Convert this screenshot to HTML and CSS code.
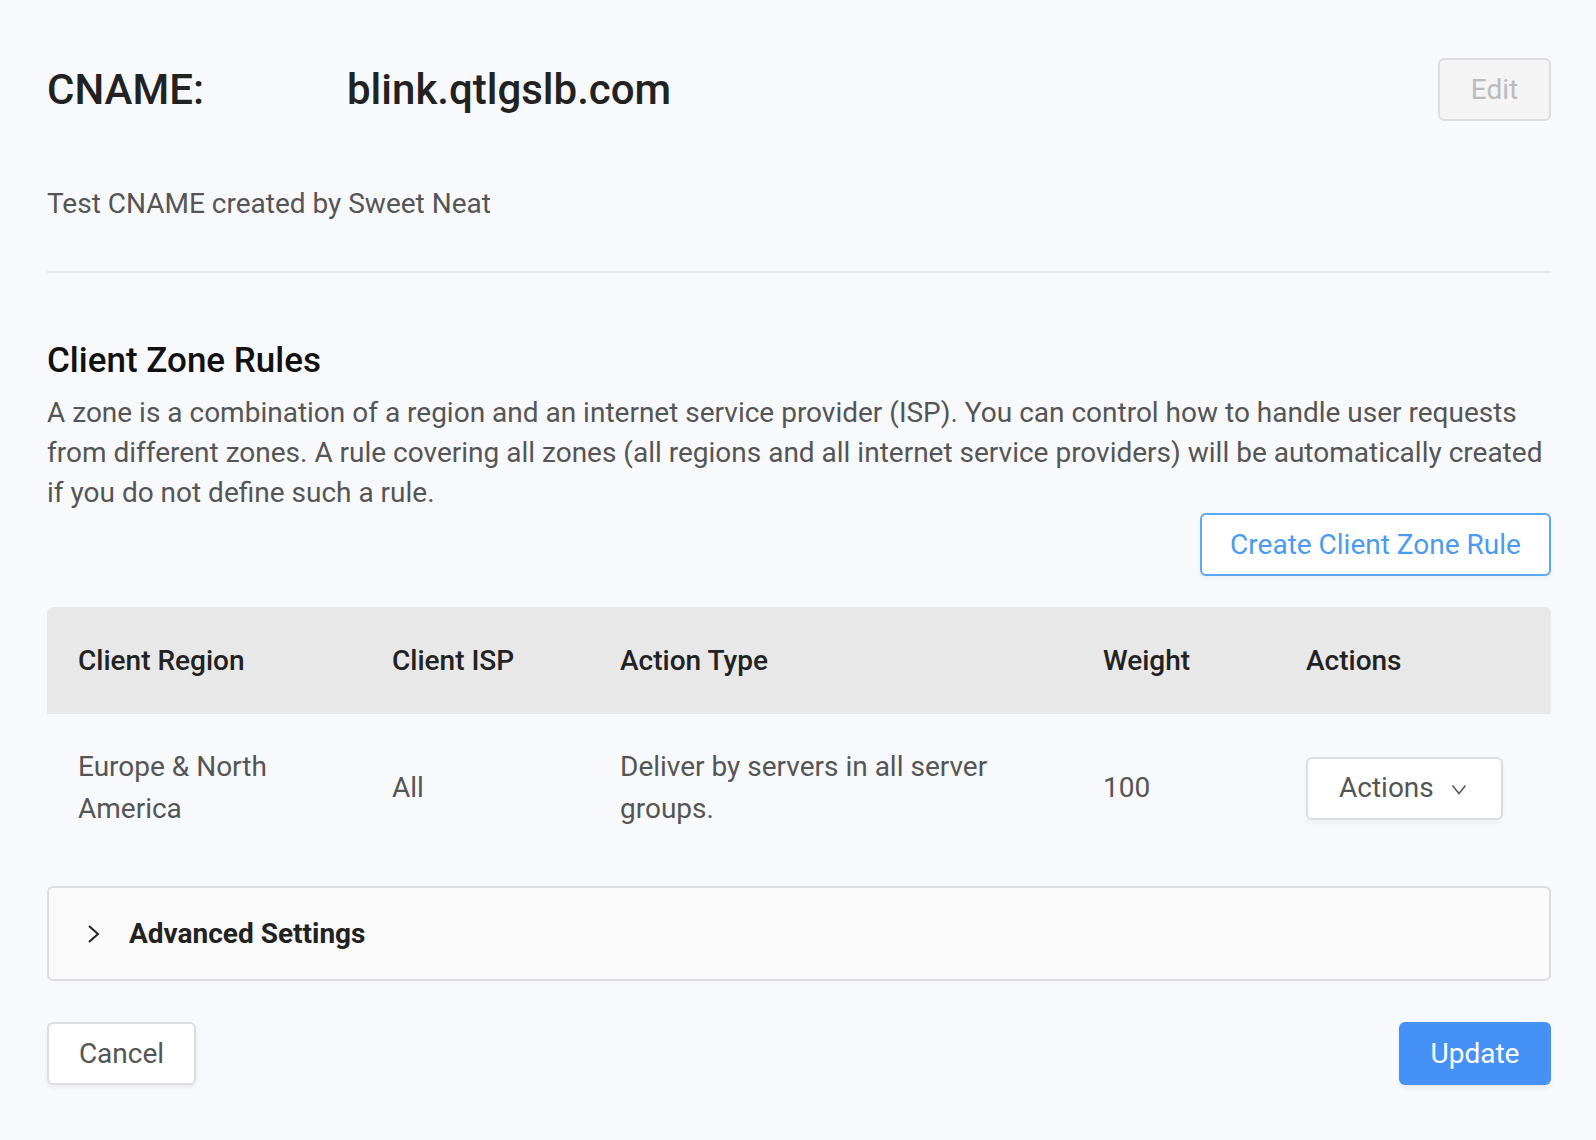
FILE: index.html
```html
<!DOCTYPE html>
<html lang="en">
<head>
<meta charset="utf-8">
<title>CNAME</title>
<link rel="stylesheet" href="styles.css">
</head>
<body>
<div class="page">
  <div class="header">
    <h1 class="cname"><span class="cname-label">CNAME:</span><span class="cname-value">blink.qtlgslb.com</span></h1>
    <button class="btn btn-disabled">Edit</button>
  </div>
  <p class="desc">Test CNAME created by Sweet Neat</p>
  <div class="divider"></div>

  <h2 class="section-title">Client Zone Rules</h2>
  <p class="section-text">A zone is a combination of a region and an internet service provider (ISP). You can control how to handle user requests from different zones. A rule covering all zones (all regions and all internet service providers) will be automatically created if you do not define such a rule.</p>
  <div class="create-row">
    <button class="btn btn-outline">Create Client Zone Rule</button>
  </div>

  <div class="table">
    <div class="row head">
      <div class="cell c1">Client Region</div>
      <div class="cell c2">Client ISP</div>
      <div class="cell c3">Action Type</div>
      <div class="cell c4">Weight</div>
      <div class="cell c5">Actions</div>
    </div>
    <div class="row body">
      <div class="cell c1">Europe &amp; North America</div>
      <div class="cell c2">All</div>
      <div class="cell c3">Deliver by servers in all server groups.</div>
      <div class="cell c4">100</div>
      <div class="cell c5">
        <button class="btn btn-actions">Actions
          <svg class="chev-down" width="16" height="11" viewBox="0 0 16 11"><polyline points="1.5,1.5 8,9.5 14.5,1.5" fill="none" stroke="#555" stroke-width="1.5"/></svg>
        </button>
      </div>
    </div>
  </div>

  <div class="advanced">
    <svg class="chev-right" width="13" height="18" viewBox="0 0 13 18"><polyline points="2,1 11,9 2,17" fill="none" stroke="#222" stroke-width="2"/></svg>
    <span class="advanced-label">Advanced Settings</span>
  </div>

  <div class="footer">
    <button class="btn btn-default">Cancel</button>
    <button class="btn btn-primary">Update</button>
  </div>
</div>
</body>
</html>
```

FILE: styles.css
```css
* { box-sizing: border-box; }

body {
  margin: 0;
  background: #f8f9fd;
  font-family: Roboto, "Noto Sans", "Liberation Sans", sans-serif;
  color: #555;
}

.page {
  padding: 58px 45px 40px 47px;
}

.header {
  display: flex;
  align-items: center;
  justify-content: space-between;
  height: 63px;
}

.cname {
  margin: 0;
  font-size: 42px;
  font-weight: 500;
  line-height: 50px;
  color: #222;
  display: flex;
}

.cname-label {
  width: 300px;
}

.btn {
  font-family: inherit;
  font-size: 28px;
  border-radius: 6px;
  height: 63px;
  padding: 0 30px;
  cursor: pointer;
  line-height: 1;
}

.btn-disabled {
  width: 113px;
  padding: 0;
  background: #f4f4f4;
  border: 2px solid #dddddd;
  color: #bbbbbb;
}

.desc {
  margin: 65px 0 0;
  font-size: 28px;
  line-height: 36px;
  color: #555;
}

.divider {
  margin-top: 49px;
  height: 2px;
  background: #e6e7ea;
}

.section-title {
  margin: 68px 0 0;
  font-size: 35px;
  font-weight: 500;
  line-height: 40px;
  color: #111;
}

.section-text {
  margin: 12px 0 0;
  font-size: 28px;
  line-height: 40px;
  color: #555;
}

.create-row {
  display: flex;
  justify-content: flex-end;
}

.btn-outline {
  height: 63px;
  width: 351px;
  padding: 0;
  background: #fff;
  border: 2px solid #5ba6f7;
  color: #4a9bf1;
  box-shadow: 0 3px 4px rgba(0, 0, 0, 0.04);
}

.table {
  margin-top: 31px;
}

.row {
  display: flex;
}

.row.head {
  height: 107px;
  align-items: center;
  background: #e8e8e8;
  border-radius: 6px 6px 0 0;
  font-size: 28px;
  font-weight: 500;
  color: #222;
}

.row.body {
  align-items: center;
  padding: 32px 0 31px;
  font-size: 28px;
  line-height: 42px;
  color: #555;
}

.cell {
  padding: 0 31px;
}

.c1 { width: 314px; }
.c2 { width: 228px; }
.c3 { width: 483px; }
.c4 { width: 203px; }
.c5 { flex: 1; }

.btn-actions {
  display: flex;
  align-items: center;
  justify-content: space-between;
  width: 197px;
  height: 63px;
  padding: 0 34px 0 31px;
  background: #fff;
  border: 2px solid #dddddd;
  color: #555;
  box-shadow: 0 3px 4px rgba(0, 0, 0, 0.04);
}

.chev-down {
  display: block;
  margin-top: 2px;
}

.advanced {
  margin-top: 25px;
  height: 95px;
  display: flex;
  align-items: center;
  border: 2px solid #dddddd;
  border-radius: 6px;
  background: #fafafa;
  padding-left: 38px;
}

.chev-right {
  display: block;
  margin-right: 29px;
}

.advanced-label {
  font-size: 28px;
  font-weight: 700;
  color: #222;
}

.footer {
  margin-top: 41px;
  display: flex;
  justify-content: space-between;
}

.btn-default {
  width: 149px;
  padding: 0;
  background: #fff;
  border: 2px solid #dddddd;
  color: #555;
  box-shadow: 0 3px 4px rgba(0, 0, 0, 0.05);
}

.btn-primary {
  width: 152px;
  padding: 0;
  background: #4691f6;
  border: none;
  color: #fff;
  box-shadow: 0 4px 4px rgba(0, 0, 0, 0.05);
}
```
